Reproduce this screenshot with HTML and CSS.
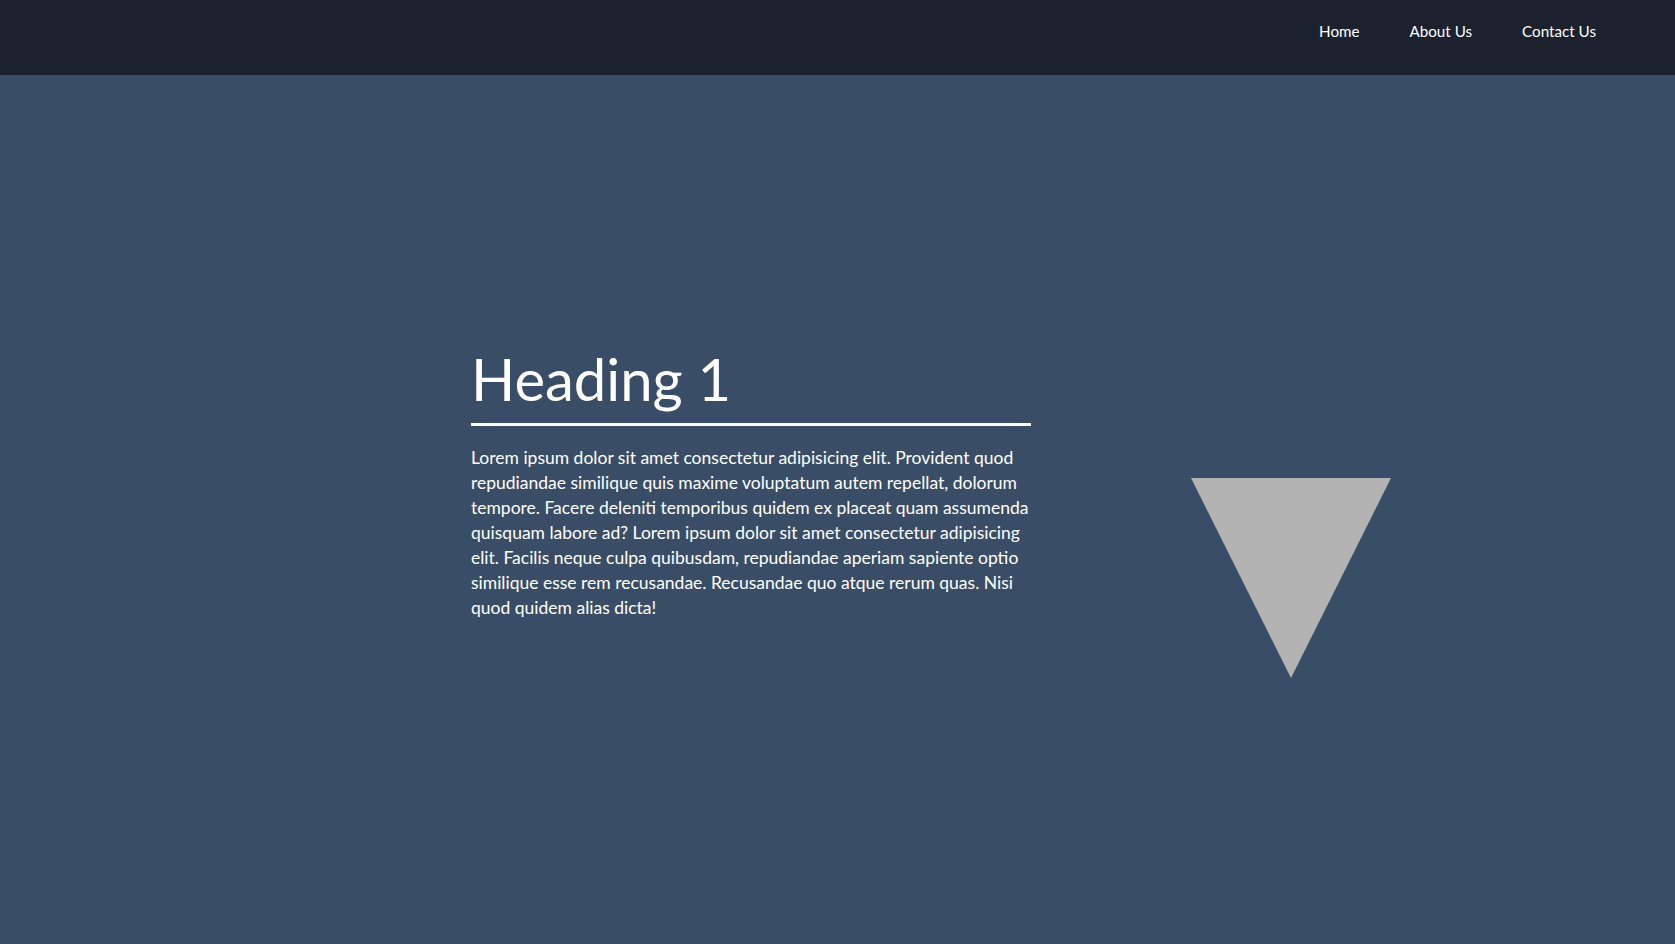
FILE: index.html
```html
<!DOCTYPE html>
<html lang="en">
<head>
<meta charset="utf-8">
<title>Page</title>
<link rel="stylesheet" href="styles.css">
</head>
<body>
<header class="navbar">
  <nav class="nav-links">
    <a href="#" class="nav-link">Home</a>
    <a href="#" class="nav-link">About Us</a>
    <a href="#" class="nav-link">Contact Us</a>
  </nav>
</header>
<main class="hero">
  <section class="hero-text">
    <h1 class="hero-title">Heading 1</h1>
    <p class="hero-body">Lorem ipsum dolor sit amet consectetur adipisicing elit. Provident quod repudiandae similique quis maxime voluptatum autem repellat, dolorum tempore. Facere deleniti temporibus quidem ex placeat quam assumenda quisquam labore ad? Lorem ipsum dolor sit amet consectetur adipisicing elit. Facilis neque culpa quibusdam, repudiandae aperiam sapiente optio similique esse rem recusandae. Recusandae quo atque rerum quas. Nisi quod quidem alias dicta!</p>
  </section>
  <div class="triangle"></div>
</main>
</body>
</html>
```
FILE: styles.css
```css
* { box-sizing: border-box; }
html, body { margin: 0; padding: 0; height: 100%; }
body {
  font-family: "Lato", "Open Sans", sans-serif;
  background: #394e66;
  color: #ffffff;
  display: flex;
  flex-direction: column;
}
.navbar {
  height: 75px;
  background: #1b212d;
  display: flex;
  justify-content: flex-end;
  align-items: flex-start;
  padding: 21px 54px 0 0;
  flex-shrink: 0;
}
.nav-links {
  display: flex;
}
.nav-link {
  color: #ffffff;
  text-decoration: none;
  font-size: 15.2px;
  line-height: 20px;
  padding: 0 25px;
}
.hero {
  flex: 1;
  display: flex;
  align-items: flex-start;
  padding: 266px 0 0 471px;
  gap: 160px;
}
.hero-text {
  width: 560px;
}
.hero-title {
  margin: 0;
  font-weight: 400;
  font-size: 58px;
  line-height: 76px;
  padding-bottom: 6px;
  border-bottom: 3px solid #ffffff;
}
.hero-body {
  margin: 19px 0 0;
  font-size: 17.5px;
  line-height: 25px;
}
.triangle {
  margin-top: 137px;
  width: 0;
  height: 0;
  border-top: 200px solid #b3b3b3;
  border-left: 100px solid transparent;
  border-right: 100px solid transparent;
}
```
